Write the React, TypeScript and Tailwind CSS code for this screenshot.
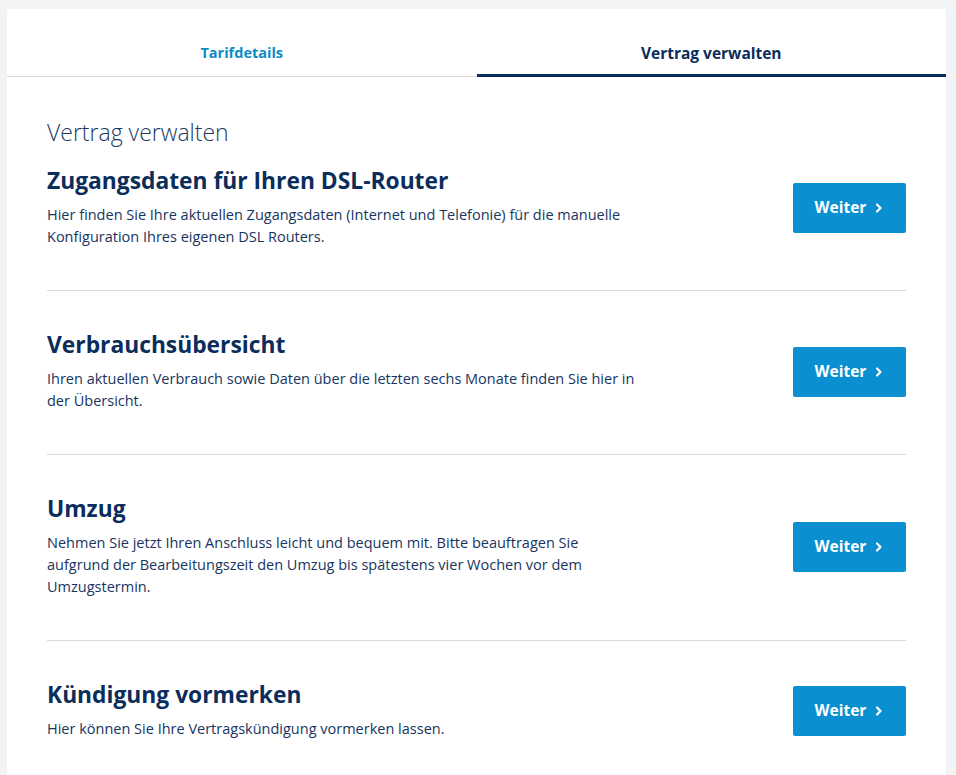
import React from "react";

const sections = [
  {
    title: "Zugangsdaten für Ihren DSL-Router",
    lines: [
      "Hier finden Sie Ihre aktuellen Zugangsdaten (Internet und Telefonie) für die manuelle",
      "Konfiguration Ihres eigenen DSL Routers.",
    ],
  },
  {
    title: "Verbrauchsübersicht",
    lines: [
      "Ihren aktuellen Verbrauch sowie Daten über die letzten sechs Monate finden Sie hier in",
      "der Übersicht.",
    ],
  },
  {
    title: "Umzug",
    lines: [
      "Nehmen Sie jetzt Ihren Anschluss leicht und bequem mit. Bitte beauftragen Sie",
      "aufgrund der Bearbeitungszeit den Umzug bis spätestens vier Wochen vor dem",
      "Umzugstermin.",
    ],
  },
  {
    title: "Kündigung vormerken",
    lines: ["Hier können Sie Ihre Vertragskündigung vormerken lassen."],
  },
];

function Chevron() {
  return (
    <svg width="10" height="12" viewBox="0 0 10 12" fill="none" className="ml-[8px]">
      <path d="M3 2.5 L6.5 6 L3 9.5" stroke="white" strokeWidth="2.2" strokeLinecap="round" strokeLinejoin="round" />
    </svg>
  );
}

export default function App() {
  return (
    <div
      className="min-h-screen bg-[#f2f3f5] pt-[9px] pl-[7px] pr-[10px]"
      style={{ fontFamily: "'Open Sans', sans-serif" }}
    >
      <div className="bg-white min-h-[766px]">
        <div className="flex border-b border-[#d9d9d9]">
          <div className="flex-1 text-center pt-[34px] pb-[13px] text-[14.5px] leading-[20px] font-bold text-[#0c8bc6]">
            Tarifdetails
          </div>
          <div className="flex-1 text-center pt-[34px] pb-[10px] text-[15.5px] leading-[20px] font-bold text-[#0b2d5b] border-b-[3px] border-[#0b2d5b] -mb-px">
            Vertrag verwalten
          </div>
        </div>
        <div className="px-10">
          <h1 className="pt-[41px] text-[23px] leading-[28px] font-light text-[#1b3a63]">
            Vertrag verwalten
          </h1>
          {sections.map((s, i) => (
            <div
              key={s.title}
              className={`flex items-center justify-between pb-[42px] ${
                i === 0 ? "pt-[21px]" : "pt-[40px]"
              } ${i < sections.length - 1 ? "border-b border-[#d9d9d9]" : ""}`}
            >
              <div>
                <h2 className="text-[22.8px] leading-[28px] font-bold text-[#0b2d5b] mb-[9px]">
                  {s.title}
                </h2>
                <p className="text-[14.5px] leading-[22px] text-[#17355f]">
                  {s.lines.map((l, j) => (
                    <React.Fragment key={j}>
                      {l}
                      {j < s.lines.length - 1 && <br />}
                    </React.Fragment>
                  ))}
                </p>
              </div>
              <button className="w-[113px] h-[50px] rounded-[2px] bg-[#0a8fd1] text-white text-[15.5px] font-bold flex items-center justify-center">
                Weiter
                <Chevron />
              </button>
            </div>
          ))}
        </div>
      </div>
    </div>
  );
}
